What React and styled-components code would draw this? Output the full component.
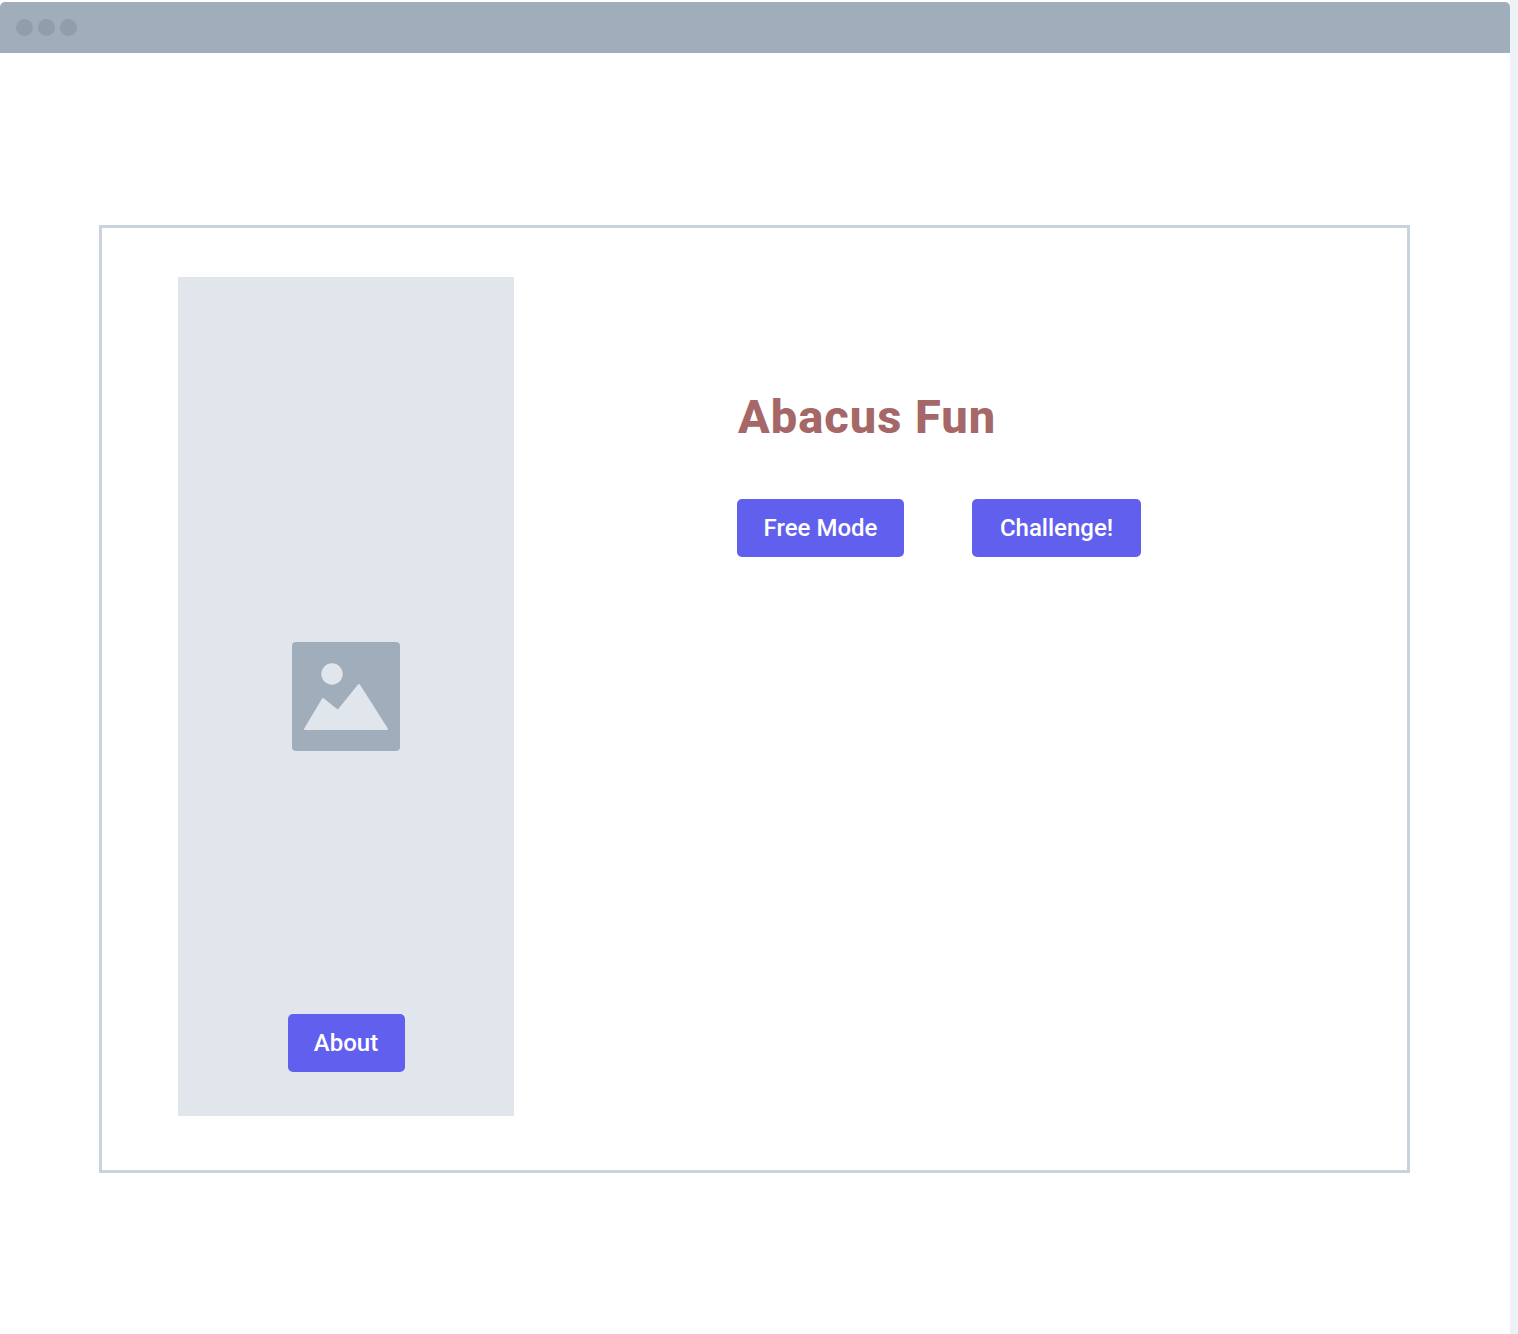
import React from 'react';
import styled, { createGlobalStyle } from 'styled-components';

const GlobalStyle = createGlobalStyle`
  html, body {
    margin: 0;
    padding: 0;
    background: #edf2f6;
  }
`;

const Page = styled.div`
  width: 1518px;
  height: 1334px;
  overflow: hidden;
  box-sizing: border-box;
  padding-right: 8px;
  font-family: 'Roboto', 'Liberation Sans', sans-serif;
`;

const BrowserWindow = styled.div`
  height: 100%;
  background: #ffffff;
  display: flex;
  flex-direction: column;
  padding-top: 2px;
  box-sizing: border-box;
`;

const TitleBar = styled.div`
  height: 51px;
  flex: none;
  background: #a0adba;
  border-radius: 5px 5px 0 0;
  display: flex;
  align-items: center;
  gap: 5px;
  padding: 0 0 0 16px;
  box-sizing: border-box;
`;

const Dot = styled.span`
  width: 17px;
  height: 17px;
  border-radius: 50%;
  background: #909eab;
`;

const Frame = styled.div`
  width: 1311px;
  height: 948px;
  box-sizing: border-box;
  margin: 172px 0 0 99px;
  border: 3px solid #c9d3dd;
  padding: 49px 0 54px 76px;
  display: flex;
`;

const SidePanel = styled.div`
  width: 336px;
  flex: none;
  background: #e1e6ed;
  display: flex;
  flex-direction: column;
  align-items: center;
  padding: 365px 0 44px;
  box-sizing: border-box;
`;

const Picture = styled.svg`
  display: block;
  width: 108px;
  height: 109px;
`;

const Content = styled.div`
  margin-left: 223px;
  padding-top: 112px;
`;

const Title = styled.h1`
  margin: 0 0 54px 1px;
  font-size: 47px;
  line-height: 56px;
  font-weight: 800;
  letter-spacing: 1px;
  color: #a56767;
`;

const ButtonRow = styled.div`
  display: flex;
  gap: 68px;
`;

const Button = styled.button`
  height: 58px;
  width: ${props => props.$width}px;
  margin-top: ${props => (props.$pushed ? 'auto' : '0')};
  border: none;
  border-radius: 5px;
  background: #6160ee;
  color: #ffffff;
  font-family: inherit;
  font-size: 24px;
  font-weight: 500;
  padding: 0;
`;

export default function App() {
  return (
    <>
      <GlobalStyle />
      <Page>
        <BrowserWindow>
          <TitleBar>
            <Dot />
            <Dot />
            <Dot />
          </TitleBar>
          <Frame>
            <SidePanel>
              <Picture viewBox="0 0 108 109">
                <rect width="108" height="109" rx="4" fill="#a0adba" />
                <circle cx="40" cy="32" r="10.7" fill="#e1e6ed" />
                <path
                  d="M13 87 L31 57 L46 69 L67 43 L95 87 Z"
                  fill="#e1e6ed"
                  stroke="#e1e6ed"
                  strokeWidth="2"
                  strokeLinejoin="round"
                />
              </Picture>
              <Button $width={117} $pushed>
                About
              </Button>
            </SidePanel>
            <Content>
              <Title>Abacus Fun</Title>
              <ButtonRow>
                <Button $width={167}>Free Mode</Button>
                <Button $width={169}>Challenge!</Button>
              </ButtonRow>
            </Content>
          </Frame>
        </BrowserWindow>
      </Page>
    </>
  );
}
